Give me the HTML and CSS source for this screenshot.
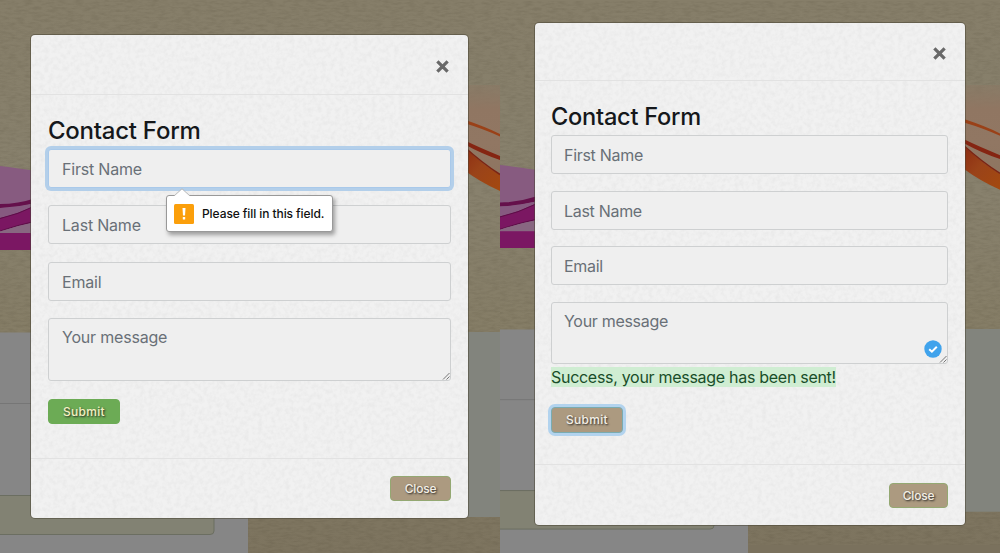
FILE: index.html
```html
<!DOCTYPE html>
<html lang="en">
<head>
<meta charset="utf-8">
<title>Contact Form</title>
<link rel="stylesheet" href="styles.css">
</head>
<body>
<main class="scenes">
  <section class="scene scene-invalid">
    <svg class="backdrop" viewBox="0 0 500 553" aria-hidden="true">
      <defs>
        <linearGradient id="sand" x1="0" y1="0" x2="0" y2="1">
          <stop offset="0" stop-color="#867e69"/><stop offset=".35" stop-color="#88816d"/><stop offset=".6" stop-color="#857d66"/><stop offset="1" stop-color="#7d745f"/>
        </linearGradient>
        <linearGradient id="peach" x1="0" y1="0" x2="0" y2="1">
          <stop offset="0" stop-color="#8c7864" stop-opacity=".5"/><stop offset=".25" stop-color="#907662"/><stop offset=".6" stop-color="#917763"/><stop offset="1" stop-color="#8d7561"/>
        </linearGradient>
        <linearGradient id="flame" x1="0" y1="0" x2="1" y2="1">
          <stop offset="0" stop-color="#8c2c12"/><stop offset=".45" stop-color="#9a4319"/><stop offset="1" stop-color="#a4490f"/>
        </linearGradient>
        <filter id="grain" x="0" y="0" width="100%" height="100%" color-interpolation-filters="sRGB">
          <feTurbulence type="fractalNoise" baseFrequency=".12 .4" numOctaves="3" seed="4"/>
          <feColorMatrix values="0 0 0 0 .2  0 0 0 0 .17  0 0 0 0 .1  .22 0 0 0 -.08"/>
        </filter>
        <filter id="paper" x="0" y="0" width="100%" height="100%" color-interpolation-filters="sRGB">
          <feTurbulence type="fractalNoise" baseFrequency=".22" numOctaves="3" seed="9"/>
          <feColorMatrix values="0 0 0 0 .55  0 0 0 0 .55  0 0 0 0 .55  .16 0 0 0 -.06"/>
        </filter>
        <g id="page">
          <rect width="500" height="553" fill="url(#sand)"/>
          <rect width="500" height="553" filter="url(#grain)"/>
          <path d="M0 166Q16 168 36 171V250H0Z" fill="#875b80"/>
          <path d="M0 204Q18 204 36 198V203Q18 207 0 208Z" fill="#65104b"/>
          <path d="M0 208Q18 208 36 203V207Q18 215 0 219Z" fill="#865a80"/>
          <path d="M0 218Q18 214 36 205V222Q18 225 0 231Z" fill="#7b1762"/>
          <path d="M0 218.500Q18 214.500 36 205.500M0 231Q18 225 36 221" fill="none" stroke="#5d0d47"/>
          <path d="M0 231.500Q18 225.500 36 222V233H0Z" fill="#886781"/>
          <path d="M0 233H36V250H0Z" fill="#7b1763"/>
          <path d="M464 85H500V182L464 150Z" fill="url(#peach)"/>
          <path d="M464 119.500Q486 127 500 134V136.500Q484 129 464 123Z" fill="#9a4118"/>
          <path d="M464 140Q478 147 500 156V160Q482 154 464 144Z" fill="#852512"/>
          <path d="M464 147Q482 164 500 175V191Q480 182 464 170Z" fill="url(#flame)"/>
          <path d="M464 146.500Q482 163 500 174.500" fill="none" stroke="#7c2413" stroke-width="1.500"/>
          <path d="M0 332.500H248V553H0Z" fill="#868686"/>
          <path d="M248 332H500V517H248Z" fill="#82847d"/>
          <path d="M0 403.500H248" stroke="#767676"/>
          <path d="M-2 495.500H210Q214 495.500 214 499V531Q214 534.500 210 534.500H-2Z" fill="#828273" stroke="#6b6e61"/>
        </g>
      </defs>
      <use href="#page"/>
    </svg>
    <div class="modal">
      <svg class="paper" aria-hidden="true"><rect width="100%" height="100%" filter="url(#paper)"/></svg>
      <header class="modal-header">
        <svg class="dismiss" viewBox="0 0 14 14" role="img" aria-label="Close"><path d="M2.200 2.200L11.800 11.800M11.800 2.200L2.200 11.800"/></svg>
      </header>
      <div class="modal-body">
        <h1 class="title">Contact Form</h1>
        <div class="field field-focused">
          <span class="placeholder">First Name</span>
          <div class="tooltip">
            <svg class="tip-arrow" viewBox="0 0 16 8"><path d="M0 8L8 .8L16 8" /></svg>
            <svg class="warn" viewBox="0 0 20 20"><rect width="20" height="20" rx="1.500" fill="#fb9f0b"/><path d="M8.500 4H11.500L11 11.500H9Z" fill="#fff"/><rect x="8.800" y="13" width="2.400" height="2.400" rx=".5" fill="#fff"/></svg>
            <span class="tip-text">Please fill in this field.</span>
          </div>
        </div>
        <div class="field"><span class="placeholder">Last Name</span></div>
        <div class="field"><span class="placeholder">Email</span></div>
        <div class="field message"><span class="placeholder">Your message</span>
          <svg class="grip" viewBox="0 0 8 8"><path d="M1 7.500L7.500 1M4.500 7.500L7.500 4.500"/></svg>
        </div>
        <button class="btn submit btn-green">Submit</button>
      </div>
      <footer class="modal-footer"><button class="btn close">Close</button></footer>
    </div>
  </section>

  <section class="scene scene-sent">
    <svg class="backdrop" viewBox="0 0 500 553" aria-hidden="true">
      <rect width="500" height="4" fill="#867e69"/>
      <use href="#page" transform="translate(0 1) scale(1 .988)"/>
      <rect y="545" width="248" height="8" fill="#868686"/>
      <rect x="248" y="545" width="252" height="8" fill="#7a715d"/>
    </svg>
    <div class="modal">
      <svg class="paper" aria-hidden="true"><rect width="100%" height="100%" filter="url(#paper)"/></svg>
      <header class="modal-header">
        <svg class="dismiss" viewBox="0 0 14 14" role="img" aria-label="Close"><path d="M2.200 2.200L11.800 11.800M11.800 2.200L2.200 11.800"/></svg>
      </header>
      <div class="modal-body">
        <h1 class="title">Contact Form</h1>
        <div class="field"><span class="placeholder">First Name</span></div>
        <div class="field"><span class="placeholder">Last Name</span></div>
        <div class="field"><span class="placeholder">Email</span></div>
        <div class="field message"><span class="placeholder">Your message</span>
          <svg class="check" viewBox="0 0 18 18"><circle cx="9" cy="9" r="8.700" fill="#40a3ec"/><path d="M5.200 9.200L7.900 11.700L12.800 6.800" fill="none" stroke="#fff" stroke-width="2"/></svg>
          <svg class="grip" viewBox="0 0 8 8"><path d="M1 7.500L7.500 1M4.500 7.500L7.500 4.500"/></svg>
        </div>
        <p class="status"><span class="status-text">Success, your message has been sent!</span></p>
        <button class="btn submit btn-focused">Submit</button>
      </div>
      <footer class="modal-footer"><button class="btn close">Close</button></footer>
    </div>
  </section>
</main>
</body>
</html>
```

FILE: styles.css
```css
* { box-sizing: border-box; }

body {
  margin: 0;
  font-family: Inter, "Liberation Sans", sans-serif;
  overflow: hidden;
}

.scenes { display: flex; width: 1000px; height: 553px; }

.scene {
  position: relative;
  width: 500px;
  height: 553px;
  overflow: hidden;
}

.scene-invalid { padding: 35px 32px 35px 31px; }
.scene-sent { padding: 22.500px 35px 28px 34.500px; }

.backdrop { position: absolute; inset: 0; width: 500px; height: 553px; }

.modal {
  position: relative;
  display: flex;
  flex-direction: column;
  height: 100%;
  background: #f1f1f1;
  border-radius: 4px;
  box-shadow: 0 0 0 1px rgba(70, 65, 50, .5);
  isolation: isolate;
}

.paper {
  position: absolute;
  inset: 0;
  width: 100%;
  height: 100%;
  z-index: -1;
}

.modal-header {
  display: flex;
  justify-content: flex-end;
  align-items: center;
  height: 60px;
  padding: 3px 18px 0 0;
  border-bottom: 1px solid #e2e2e2;
}

.scene-sent .modal-header { height: 58.500px; padding-top: 4px; }

.dismiss { width: 15px; height: 15px; }
.dismiss path { fill: none; stroke: #686868; stroke-width: 3; }

.modal-body { flex: 1; padding: 20px 17px 0; }
.scene-sent .modal-body { padding-left: 16.500px; }

.title {
  margin: 0 0 3px;
  height: 31px;
  font-size: 24px;
  line-height: 31px;
  font-weight: 500;
  letter-spacing: -.25px;
  color: #15181b;
  white-space: nowrap;
}

.field {
  position: relative;
  height: 39px;
  margin-bottom: 17.300px;
  padding: 0 13px;
  border: 1px solid #ced0d1;
  border-radius: 3px;
  background: #efefef;
  line-height: 38px;
  font-size: 16px;
}

.placeholder { color: #697077; letter-spacing: -.2px; white-space: nowrap; }

.field-focused { border-color: #a9c9ea; box-shadow: 0 0 0 3px #b3cfea; }

.field.message { height: 63px; margin-bottom: 18px; line-height: 36px; }

.scene-sent .title { height: 31px; font-size: 23.600px; }
.scene-sent .field { height: 39px; margin-bottom: 16.700px; padding: 0 12px; }
.scene-sent .field.message { height: 62px; margin-bottom: 3px; }
.scene-sent .placeholder { letter-spacing: -.3px; }

.grip { position: absolute; right: 0; bottom: 0; width: 8px; height: 8px; }
.grip path { fill: none; stroke: #777; stroke-width: 1; }

.scene-sent .check { position: absolute; right: 5px; bottom: 5px; width: 18px; height: 18px; }

.tooltip {
  position: absolute;
  left: 117px;
  top: 45px;
  z-index: 2;
  display: flex;
  align-items: center;
  gap: 8px;
  width: 167px;
  height: 37px;
  padding-left: 7px;
  background: #fff;
  border: 1px solid #999;
  border-radius: 3px;
  box-shadow: 2px 3px 4px rgba(0, 0, 0, .35);
}

.tip-arrow { position: absolute; left: 7px; top: -8px; width: 16px; height: 8px; }
.tip-arrow path { fill: #fff; stroke: #aaa; stroke-width: .8; }

.warn { width: 20px; height: 20px; }

.tip-text {
  font-size: 12px;
  line-height: 16px;
  color: #111;
  font-weight: 500;
  letter-spacing: -.08px;
  white-space: nowrap;
}

.status { margin: 0 0 17.500px; height: 22px; line-height: 21px; font-size: 16px; }
.status-text {
  background: #cfedd2;
  color: #194d29;
  letter-spacing: -.29px;
  white-space: nowrap;
}

.btn {
  display: block;
  height: 25px;
  padding: 0;
  border: 1px solid #94a872;
  border-radius: 4px;
  background: #ac9a80;
  color: #f3eee4;
  font-family: Inter, sans-serif;
  font-size: 12px;
  font-weight: 500;
  line-height: 23px;
  text-align: center;
  text-shadow: 1px 1px 2px #222;
}

.submit { width: 72px; letter-spacing: .3px; }
.close { width: 61px; letter-spacing: -.2px; }
.scene-sent .close { width: 59px; }
.btn-green { background: #6cab55; border-color: #6cab55; color: #f3f1c2; }
.btn-focused { height: 26px; border-color: #7aabb0; box-shadow: 0 0 0 3px #b2d3ee; }

.modal-footer {
  display: flex;
  justify-content: flex-end;
  height: 60px;
  padding: 17px 17px 0;
  border-top: 1px solid #e2e2e2;
}

.scene-sent .modal-footer { height: 61px; padding-top: 18px; }
```
